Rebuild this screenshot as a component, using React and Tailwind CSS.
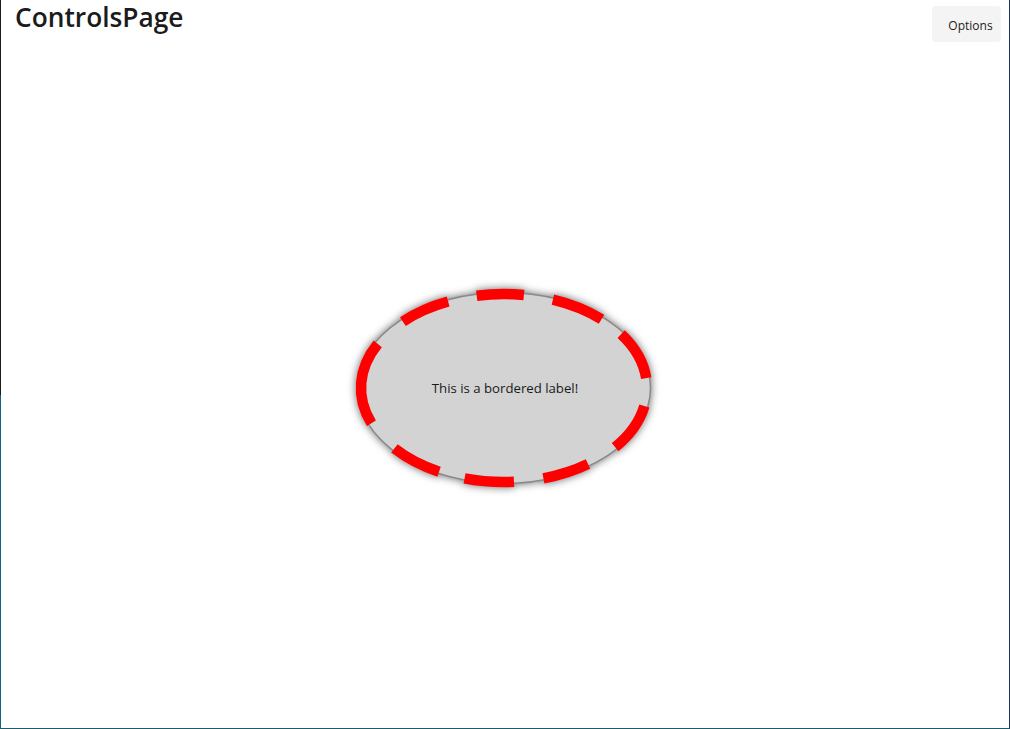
import React from 'react'

// dash segments of the red ring, as start/end angles (degrees, clockwise from 3 o'clock)
const DASHES = [
  [11, 39], [54, 74], [86, 106], [117, 140], [158, 208],
  [225, 247], [259, 278], [290, 313], [325, 354],
]

const CX = 159
const CY = 108
const RX = 143
const RY = 94

function pt(deg) {
  const t = (deg * Math.PI) / 180
  return `${(CX + RX * Math.cos(t)).toFixed(2)} ${(CY + RY * Math.sin(t)).toFixed(2)}`
}

function BorderedLabel({ text }) {
  return (
    <div className="grid place-items-center">
      <svg
        width="320"
        height="216"
        viewBox="0 0 320 216"
        className="col-start-1 row-start-1 [filter:drop-shadow(0_0_4px_rgba(0,0,0,0.6))]"
      >
        <ellipse cx={CX} cy={CY} rx="146.5" ry="95.5" fill="#d3d3d3" stroke="#8a8a8a" strokeWidth="1.5" />
        {DASHES.map(([a, b]) => (
          <path
            key={a}
            d={`M ${pt(a)} A ${RX} ${RY} 0 0 1 ${pt(b)}`}
            fill="none"
            stroke="#ff0000"
            strokeWidth="10.5"
          />
        ))}
      </svg>
      <span className="relative col-start-1 row-start-1 pt-[2px] text-[13.2px] text-[#1a1a1a] font-['Open_Sans',sans-serif]">
        {text}
      </span>
    </div>
  )
}

export default function App() {
  return (
    <div className="w-[1010px] h-[729px] pl-px bg-[linear-gradient(to_bottom,#1b1b1b_395px,#16637d_395px)] flex">
      <div className="flex-1 flex flex-col bg-white border-r border-r-[#1f355a] border-b border-b-[#1d5a72]">
        {/* Header */}
        <div className="h-12 flex items-start justify-between pl-[14px] pr-[8px]">
          <h1 className="text-[26.3px] leading-[34px] font-semibold text-[#1b1b1b] font-['Open_Sans',sans-serif]">
            ControlsPage
          </h1>
          <button className="mt-[6px] h-9 w-[69px] pt-[3px] pl-[8px] rounded-[4px] bg-[#f4f4f4] text-[12px] text-[#1b1b1b] font-['Open_Sans',sans-serif]">
            Options
          </button>
        </div>

        {/* Content */}
        <div className="flex-1 flex items-center justify-center">
          <BorderedLabel text="This is a bordered label!" />
        </div>
      </div>
    </div>
  )
}
